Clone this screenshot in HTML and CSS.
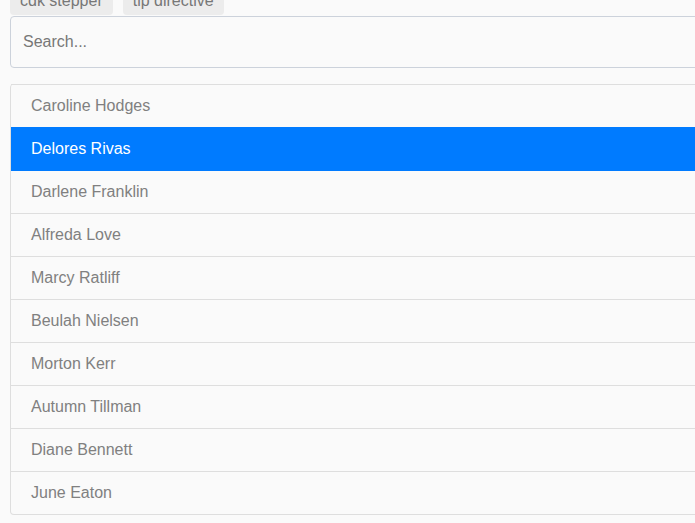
FILE: index.html
```html
<!DOCTYPE html>
<html>
<head>
<meta charset="utf-8">
<link rel="stylesheet" href="styles.css">
</head>
<body>
<div class="page">
  <div class="tags">
    <span class="tag">cdk stepper</span>
    <span class="tag">tip directive</span>
  </div>
  <input class="search" type="text" placeholder="Search...">
  <ul class="list">
    <li class="item">Caroline Hodges</li>
    <li class="item active">Delores Rivas</li>
    <li class="item">Darlene Franklin</li>
    <li class="item">Alfreda Love</li>
    <li class="item">Marcy Ratliff</li>
    <li class="item">Beulah Nielsen</li>
    <li class="item">Morton Kerr</li>
    <li class="item">Autumn Tillman</li>
    <li class="item">Diane Bennett</li>
    <li class="item">June Eaton</li>
  </ul>
</div>
</body>
</html>
```

FILE: styles.css
```css
html, body {
  margin: 0;
  padding: 0;
  background: #fafafa;
  overflow: hidden;
}
body {
  font-family: "Liberation Sans", Arial, sans-serif;
  font-size: 16px;
  line-height: 24px;
  color: #808080;
}
.page {
  width: 1000px;
  margin-top: -13px;
  padding-left: 10px;
  display: flex;
  flex-direction: column;
}
.tags {
  display: flex;
  gap: 10px;
  margin-bottom: 1px;
}
.tag {
  background: #ececec;
  color: #777;
  padding: 2px 10px;
  border-radius: 0 0 4px 4px;
  line-height: 24px;
}
.search {
  box-sizing: border-box;
  height: 52px;
  width: 100%;
  margin: 0;
  padding: 0 12px;
  border: 1px solid #ccd2db;
  border-radius: 4px;
  background: #fafafa;
  font-family: inherit;
  font-size: 16px;
  color: #555;
  outline: none;
}
.search::placeholder {
  color: #777;
}
.list {
  list-style: none;
  margin: 16px 0 0;
  padding: 0;
  border: 1px solid #dedede;
  border-top: none;
  border-radius: 4px 0 0 4px;
}
.item {
  padding: 9px 20px;
  border-top: 1px solid #dedede;
}
.item.active {
  background: #007bff;
  border-top-color: #007bff;
  color: #fff;
}
.item.active + .item {
  border-top-color: #007bff;
}
```
